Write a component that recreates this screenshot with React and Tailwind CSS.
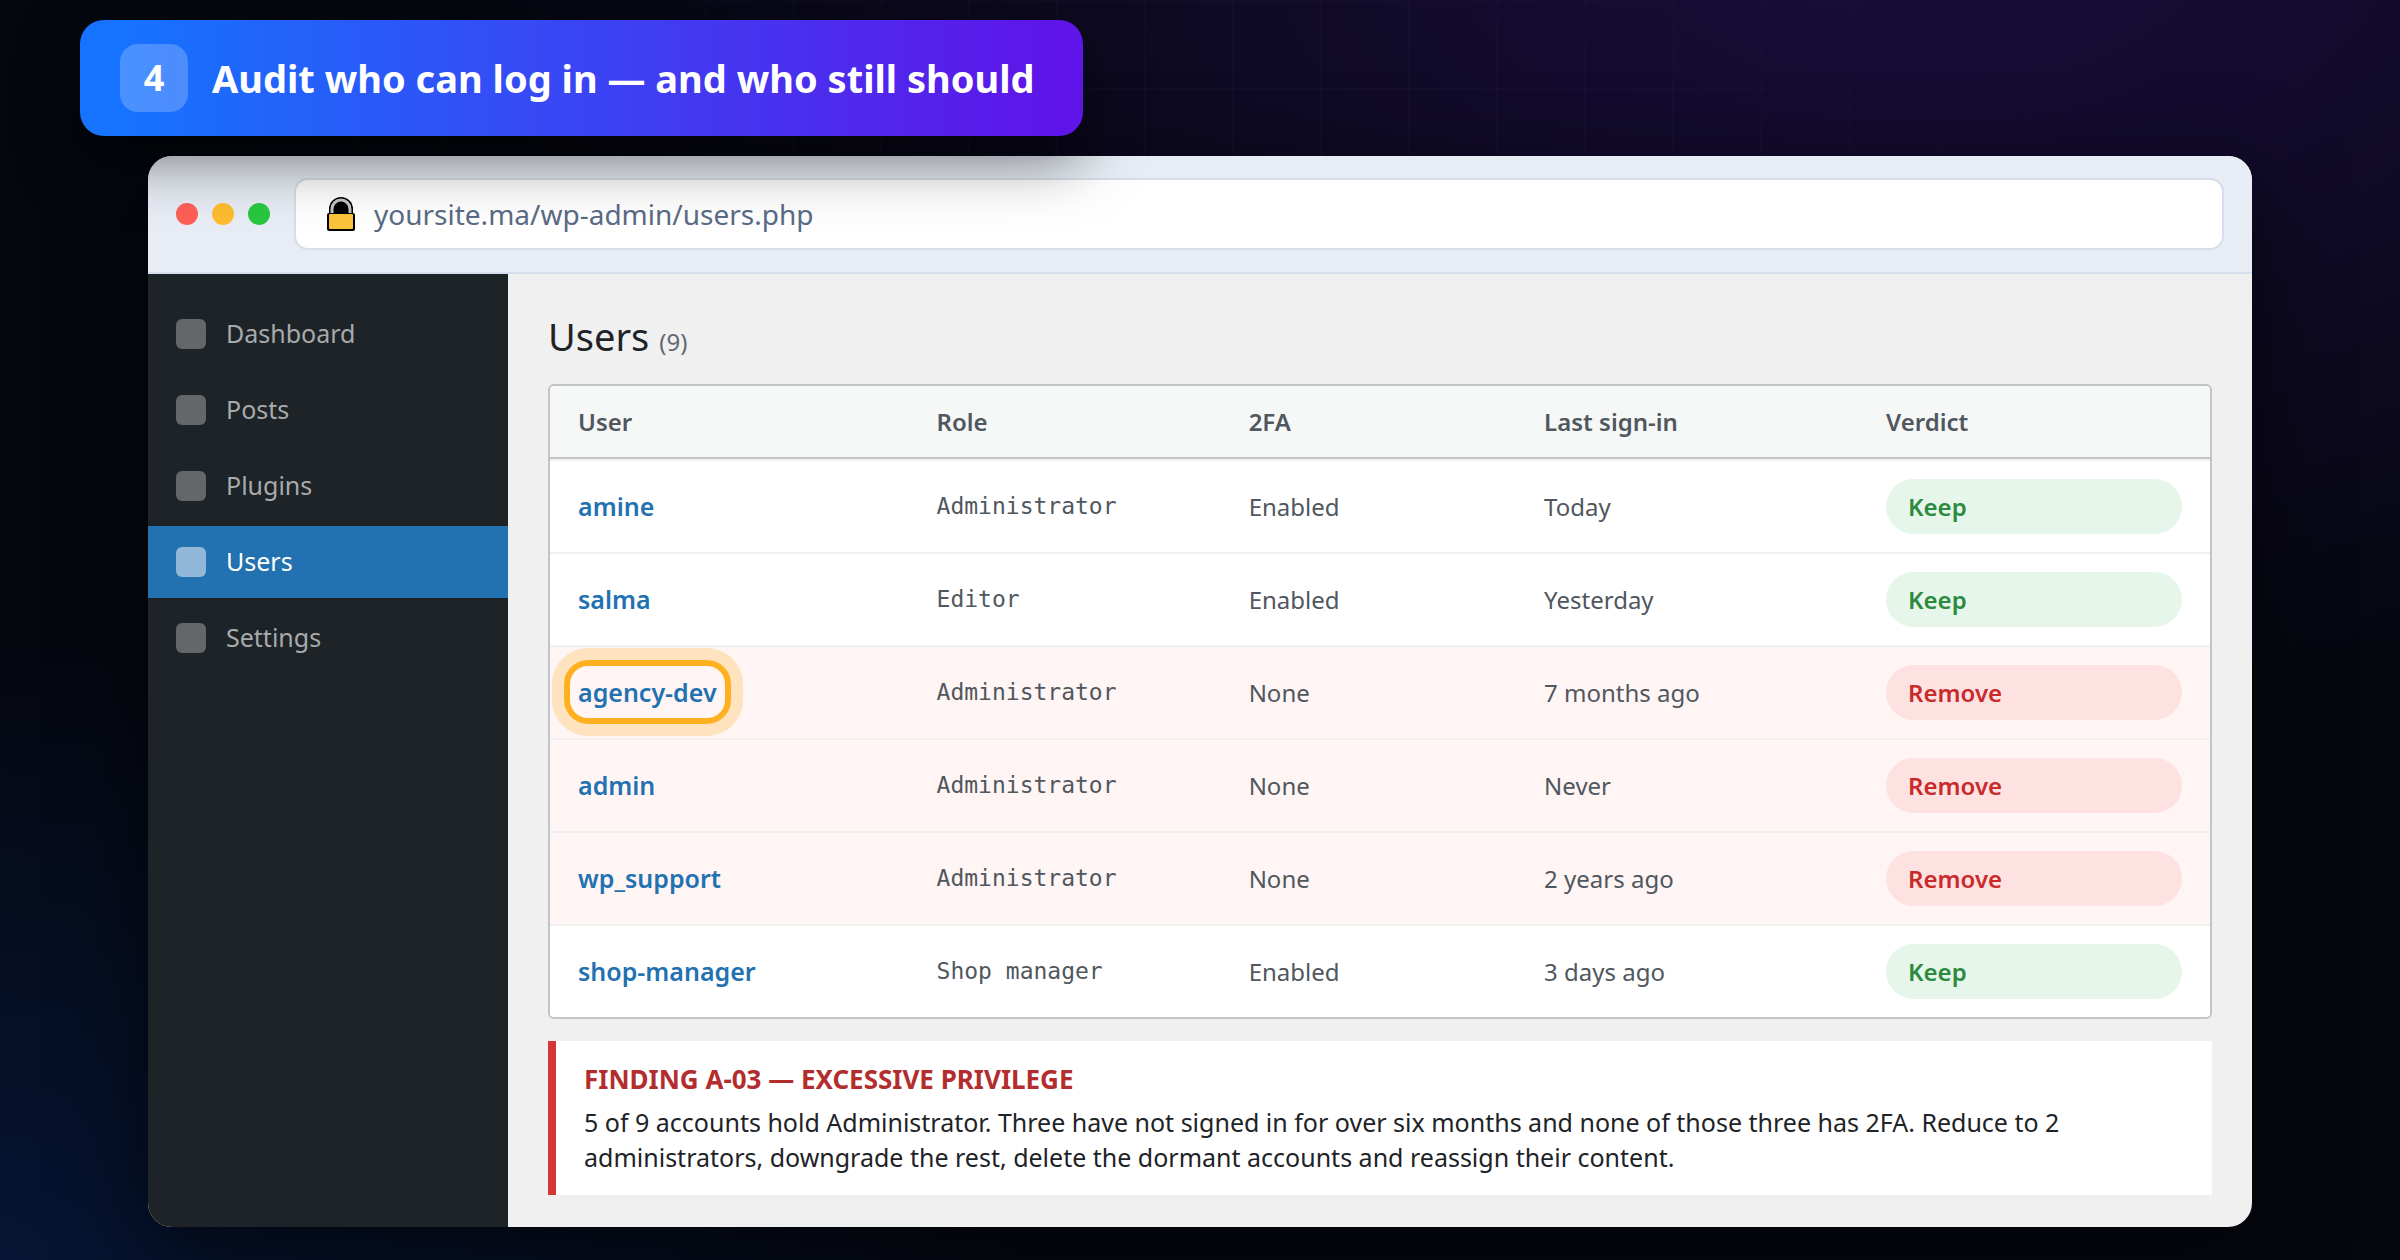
import React from "react";

const MENU = [
  { label: "Dashboard" },
  { label: "Posts" },
  { label: "Plugins" },
  { label: "Users", active: true },
  { label: "Settings" },
];

const USERS = [
  { name: "amine", role: "Administrator", twoFa: "Enabled", last: "Today" },
  { name: "salma", role: "Editor", twoFa: "Enabled", last: "Yesterday" },
  {
    name: "agency-dev",
    role: "Administrator",
    twoFa: "None",
    last: "7 months ago",
    remove: true,
    highlight: true,
  },
  {
    name: "admin",
    role: "Administrator",
    twoFa: "None",
    last: "Never",
    remove: true,
  },
  {
    name: "wp_support",
    role: "Administrator",
    twoFa: "None",
    last: "2 years ago",
    remove: true,
  },
  {
    name: "shop-manager",
    role: "Shop manager",
    twoFa: "Enabled",
    last: "3 days ago",
  },
];

const LockIcon = () => (
  <svg
    viewBox="0 0 30 36"
    className="w-[30px] h-[36px] shrink-0"
    aria-hidden="true"
  >
    <path d="M3 19V13a12 12 0 0 1 24 0v6z" fill="#000000" />
    <path
      d="M6 19v-6a9 9 0 0 1 18 0v6"
      fill="none"
      stroke="#c4c4c4"
      strokeWidth="3"
    />
    <rect x="1" y="17" width="28" height="18" rx="2" fill="#000000" />
    <rect x="3" y="18" width="24" height="15" rx="1" fill="#fdc33a" />
  </svg>
);

const Backdrop = () => (
  <div className="absolute inset-0 -z-10 bg-[radial-gradient(ellipse_60%_60%_at_80%_-5%,#190d3b_0%,transparent_100%),radial-gradient(ellipse_50%_60%_at_-5%_110%,#06183c_0%,transparent_100%)]">
    {/* faint grid */}
    <div className="absolute inset-0 bg-[linear-gradient(rgba(255,255,255,0.04)_2px,transparent_2px),linear-gradient(90deg,rgba(255,255,255,0.04)_2px,transparent_2px)] bg-[size:88px_88px] mask-[radial-gradient(ellipse_50%_60%_at_50%_40%,black_10%,transparent_100%)]" />
  </div>
);

const StepBanner = () => (
  <div className="relative z-10 flex w-fit items-center gap-6 ml-20 pl-10 pr-12 py-6 rounded-[24px] bg-[linear-gradient(90deg,#1673ff_4%,#5f14e8_98%)] text-white font-bold shadow-[0_24px_60px_rgba(0,0,0,0.5)]">
    <span className="flex items-center justify-center w-[68px] h-[68px] rounded-[18px] bg-white/22 text-[36px]">
      4
    </span>
    <h1 className="text-[38px] leading-[52px]">
      Audit who can log in — and who still should
    </h1>
  </div>
);

const BrowserBar = () => (
  <div className="flex items-center gap-6 px-7 py-[22px] bg-[#e8edf5] border-b-2 border-[#d5deea]">
    <div className="flex gap-[14px]">
      <span className="w-[22px] h-[22px] rounded-full bg-[#ff5f57]" />
      <span className="w-[22px] h-[22px] rounded-full bg-[#febc2e]" />
      <span className="w-[22px] h-[22px] rounded-full bg-[#28c840]" />
    </div>
    <div className="flex flex-1 items-center gap-[18px] h-[72px] px-[30px] rounded-[14px] border-2 border-[#d5deea] bg-white">
      <LockIcon />
      <input
        type="text"
        readOnly
        aria-label="Address"
        defaultValue="yoursite.ma/wp-admin/users.php"
        className="flex-1 bg-transparent text-[28px] text-[#5a6b85] outline-none"
      />
    </div>
  </div>
);

const Sidebar = () => (
  <nav className="flex w-[360px] shrink-0 flex-col gap-1 py-6 bg-[#1d2327]">
    {MENU.map((item) => (
      <a
        key={item.label}
        href="#"
        className={
          item.active
            ? "flex items-center gap-5 h-[72px] px-7 text-[25px] bg-[#2271b1] text-white"
            : "flex items-center gap-5 h-[72px] px-7 text-[25px] text-[#a7aaad]"
        }
      >
        <span
          className={
            item.active
              ? "w-[30px] h-[30px] rounded-[6px] bg-white/50"
              : "w-[30px] h-[30px] rounded-[6px] bg-[#646669]"
          }
        />
        {item.label}
      </a>
    ))}
  </nav>
);

const UserRow = ({ user }) => (
  <tr
    className={
      user.remove
        ? "bg-[#fff5f4] *:border-t-2 *:border-[#f0f0f1] *:px-7 *:py-[18px]"
        : "bg-white *:border-t-2 *:border-[#f0f0f1] *:px-7 *:py-[18px]"
    }
  >
    <td>
      <a
        href="#"
        className="relative inline-block leading-[36px] text-[25px] font-semibold text-[#2271b1]"
      >
        {user.name}
        {user.highlight && (
          <span className="absolute -inset-[14px] rounded-[24px] border-6 border-[#ffb020] shadow-[0_0_0_12px_rgba(255,176,32,0.25)]" />
        )}
      </a>
    </td>
    <td className="font-['DejaVu_Sans_Mono',monospace] text-[23px]">
      {user.role}
    </td>
    <td>{user.twoFa}</td>
    <td>{user.last}</td>
    <td>
      <span
        className={
          user.remove
            ? "block px-[22px] rounded-full leading-[55px] font-semibold bg-[#fee2e2] text-[#c92a2a]"
            : "block px-[22px] rounded-full leading-[55px] font-semibold bg-[#e6f6ea] text-[#2b8a3e]"
        }
      >
        {user.remove ? "Remove" : "Keep"}
      </span>
    </td>
  </tr>
);

const UsersTable = () => (
  <div className="overflow-hidden rounded-[6px] border-2 border-[#c3c4c7] bg-white">
    <table className="w-full table-fixed border-separate border-spacing-0 text-left text-[24px] text-[#50575e]">
      <thead>
        <tr className="h-[73px] bg-[#f6f7f7] *:border-b-2 *:border-[#c3c4c7] *:px-7 *:font-semibold">
          <th className="w-[21.6%]">User</th>
          <th className="w-[18.8%]">Role</th>
          <th className="w-[17.8%]">2FA</th>
          <th className="w-[20.6%]">Last sign-in</th>
          <th>Verdict</th>
        </tr>
      </thead>
      <tbody>
        {USERS.map((user) => (
          <UserRow key={user.name} user={user} />
        ))}
      </tbody>
    </table>
  </div>
);

const Finding = () => (
  <div className="mt-[22px] px-7 pt-[18px] pb-5 border-l-8 border-[#d63638] bg-white text-[#1d2327]">
    <h3 className="mb-[6px] leading-[40px] text-[26px] font-bold text-[#b32d2e]">
      FINDING A-03 — EXCESSIVE PRIVILEGE
    </h3>
    <p className="leading-[35px] text-[25px]">
      5 of 9 accounts hold Administrator. Three have not signed in for over six
      months and none of those three has 2FA. Reduce to 2 administrators,
      downgrade the rest, delete the dormant accounts and reassign their
      content.
    </p>
  </div>
);

const App = () => {
  return (
    <div className="relative isolate min-h-screen overflow-hidden bg-[#05070f] pt-5 pb-[34px] font-['Noto_Sans',sans-serif]">
      <Backdrop />
      <StepBanner />
      <div className="mx-[148px] mt-5 overflow-hidden rounded-[24px] bg-[#f0f0f1] shadow-[0_24px_90px_rgba(0,0,0,0.6)]">
        <BrowserBar />
        <div className="flex">
          <Sidebar />
          <main className="flex-1 px-10 pt-8 pb-8">
            <h2 className="mb-3 leading-[60px] text-[38px] text-[#1d2327]">
              Users <span className="text-[24px] text-[#646970]">(9)</span>
            </h2>
            <UsersTable />
            <Finding />
          </main>
        </div>
      </div>
    </div>
  );
};

export default App;
